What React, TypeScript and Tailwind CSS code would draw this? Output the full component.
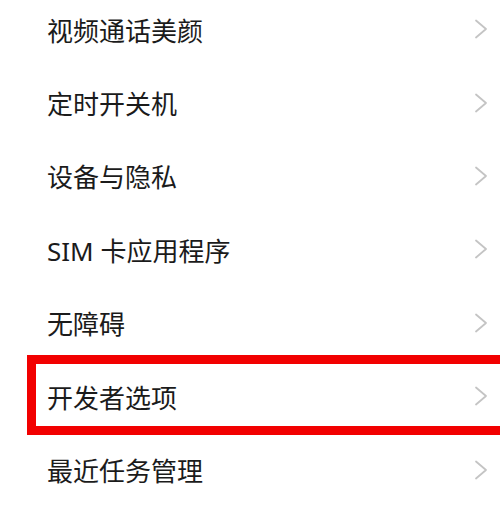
const items = [
  '视频通话美颜',
  '定时开关机',
  '设备与隐私',
  'SIM 卡应用程序',
  '无障碍',
  '开发者选项',
  '最近任务管理',
]

function Chevron() {
  return (
    <svg width="14" height="20" viewBox="0 0 14 20" fill="none" className="text-[#c4c4c4]">
      <polyline points="2,1.5 12,10 2,18.5" stroke="currentColor" strokeWidth="1.8" strokeLinecap="round" strokeLinejoin="round" />
    </svg>
  )
}

export default function App() {
  return (
    <div
      className="w-[500px] h-[513px] overflow-hidden bg-white"
      style={{ fontFamily: '"Noto Sans", "Noto Sans CJK SC", sans-serif' }}
    >
      <div className="-mt-[6px]">
        {items.map((label, i) => (
          <div key={label} className="relative flex items-center h-[73.4px] pl-[47px] pr-[12px]">
            <span className="flex-1 text-[26px] leading-none text-[#1b1b1b]">{label}</span>
            <div className="-mt-[3px]">
              <Chevron />
            </div>
            {i === 5 && (
              <div className="absolute left-[27px] -right-[20px] -top-[6px] bottom-[-1px] border-[9px] border-[#f20000] pointer-events-none" />
            )}
          </div>
        ))}
      </div>
    </div>
  )
}
